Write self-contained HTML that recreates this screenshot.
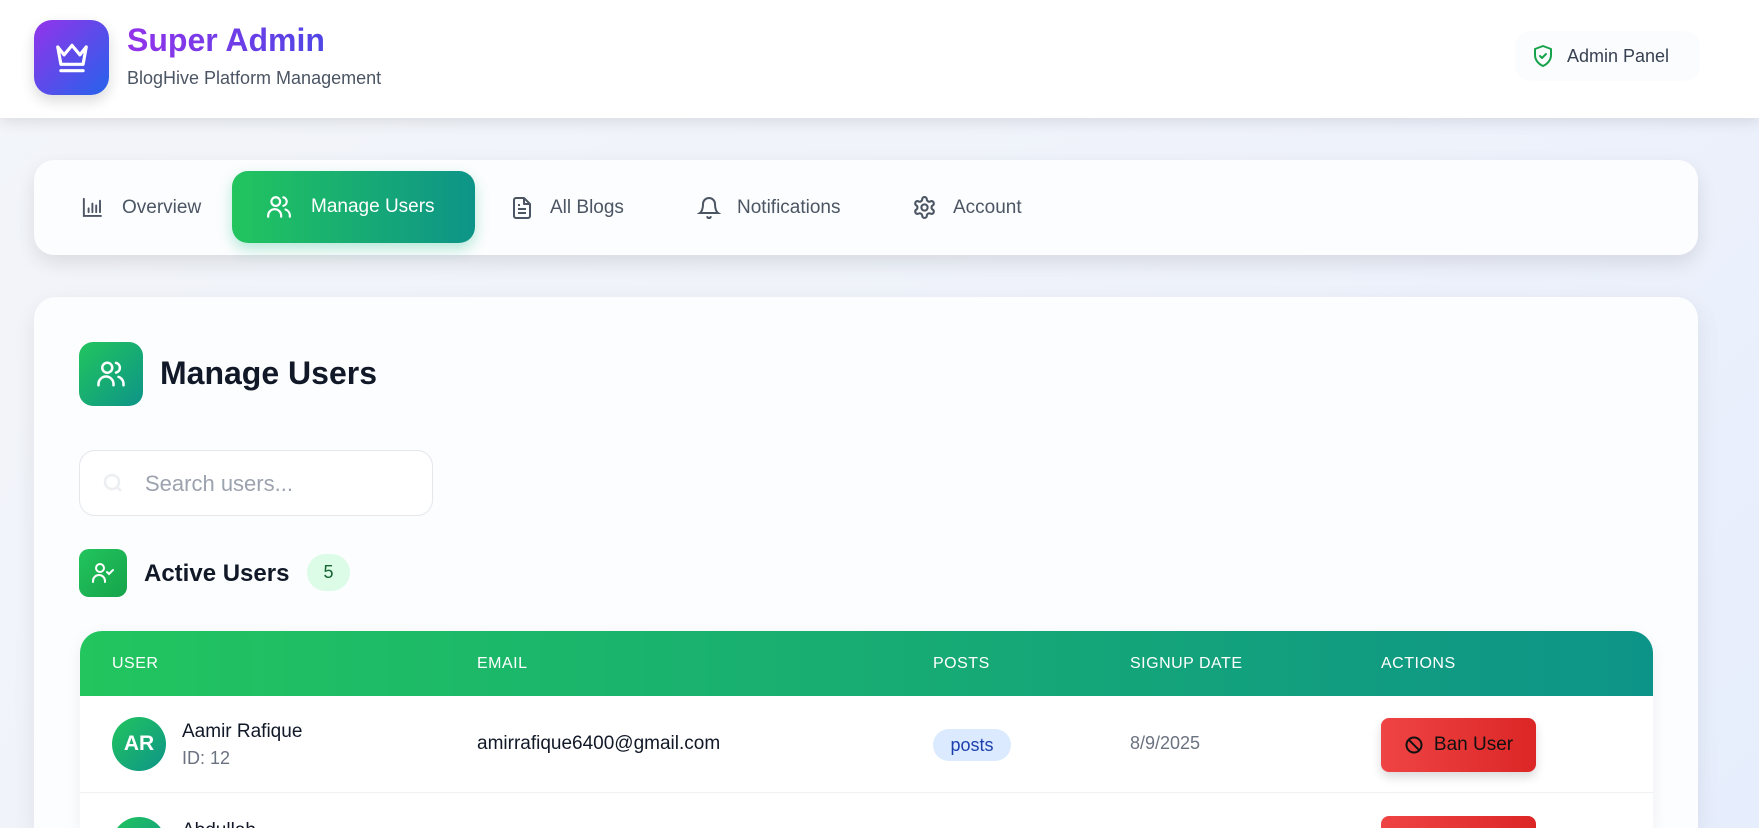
<!DOCTYPE html>
<html><head><meta charset="utf-8"><style>
*{box-sizing:border-box;margin:0;padding:0}
html{width:1759px;height:828px;overflow:hidden}
body{width:1759px;height:828px;overflow:hidden;font-family:"Liberation Sans",sans-serif;background:linear-gradient(135deg,#f3f5f9 0%,#eef2fb 60%,#e6edfc 100%);position:relative}
.abs{position:absolute}
.header{left:0;top:0;width:1759px;height:118px;background:#fff;box-shadow:0 4px 14px rgba(0,0,0,.1)}
.logo{left:34px;top:20px;width:75px;height:75px;border-radius:18px;background:linear-gradient(135deg,#9333ea,#2563eb);box-shadow:0 6px 14px rgba(0,0,0,.15);display:flex;align-items:center;justify-content:center}
.title{left:127px;top:22px;font-size:32px;font-weight:bold;background:linear-gradient(90deg,#9333ea,#4f46e5);-webkit-background-clip:text;color:transparent}
.sub{left:127px;top:68px;font-size:18px;color:#4b5563}
.pill{left:1515px;top:31px;width:185px;height:50px;border-radius:16px;background:#fbfcfe;display:flex;align-items:center;padding-left:16px;font-size:18px;color:#374151;gap:12px}
.nav{left:34px;top:160px;width:1664px;height:95px;border-radius:20px;background:#fcfdfe;box-shadow:0 8px 20px rgba(0,0,0,.1)}
.tab{position:absolute;top:0;height:95px;display:flex;align-items:center;font-size:19px;color:#4b5563;gap:0}
.active{left:198px;top:11px;width:243px;height:72px;border-radius:16px;background:linear-gradient(90deg,#22c55e,#0d9488);color:#fff;box-shadow:0 6px 14px rgba(16,185,129,.3)}
.main{left:34px;top:297px;width:1664px;height:531px;border-radius:22px 22px 0 0;background:#fcfdfe;box-shadow:0 8px 24px rgba(0,0,0,.08)}
.ic{display:flex;align-items:center;justify-content:center}
.col{position:absolute}
</style></head><body>
<div class="abs header"></div>
<div class="abs logo"><svg width="38" height="38" viewBox="0 0 24 24" fill="none" stroke="#fff" stroke-width="2" stroke-linecap="round" stroke-linejoin="round"><path d="M3 5l4 5 5-6 5 6 4-5-2 11H5z"/><path d="M5 20h14"/></svg></div>
<div class="abs title">Super Admin</div>
<div class="abs sub">BlogHive Platform Management</div>
<div class="abs pill"><svg width="24" height="24" viewBox="0 0 24 24" fill="none" stroke="#16a34a" stroke-width="2" stroke-linecap="round" stroke-linejoin="round"><path d="M12 2l8 3v6c0 5-3.5 9-8 11-4.5-2-8-6-8-11V5z"/><path d="M9 12l2 2 4-4"/></svg>Admin Panel</div>

<div class="abs nav">
 <div class="tab" style="left:47px"><svg width="24" height="24" viewBox="0 0 24 24" fill="none" stroke="#4b5563" stroke-width="2" stroke-linecap="round"><path d="M3 3v18h18M8 17v-4M12 17V8M16 17v-7M20 17V5" transform="scale(.95)"/></svg><span style="margin-left:17px">Overview</span></div>
 <div class="tab active abs" style="padding-left:34px"><svg width="26" height="26" viewBox="0 0 24 24" fill="none" stroke="#fff" stroke-width="2" stroke-linecap="round"><circle cx="9" cy="7" r="4"/><path d="M2 21v-1a6 6 0 0 1 12 0v1M16 3.1a4 4 0 0 1 0 7.8M22 21v-1a6 6 0 0 0-4-5.7"/></svg><span style="margin-left:19px">Manage Users</span></div>
 <div class="tab" style="left:476px"><svg width="24" height="26" viewBox="0 0 24 24" fill="none" stroke="#4b5563" stroke-width="2" stroke-linejoin="round"><path d="M14 2H6a2 2 0 0 0-2 2v16a2 2 0 0 0 2 2h12a2 2 0 0 0 2-2V8z"/><path d="M14 2v6h6M8 13h8M8 17h8M8 9h2"/></svg><span style="margin-left:16px">All Blogs</span></div>
 <div class="tab" style="left:663px"><svg width="24" height="26" viewBox="0 0 24 24" fill="none" stroke="#4b5563" stroke-width="2" stroke-linecap="round"><path d="M6 8a6 6 0 0 1 12 0c0 7 3 9 3 9H3s3-2 3-9M10.3 21a1.9 1.9 0 0 0 3.4 0"/></svg><span style="margin-left:16px">Notifications</span></div>
 <div class="tab" style="left:878px"><svg width="25" height="25" viewBox="0 0 24 24" fill="none" stroke="#4b5563" stroke-width="2"><circle cx="12" cy="12" r="3"/><path d="M12.2 2h-.4a2 2 0 0 0-2 2v.2a2 2 0 0 1-1 1.7l-.4.3a2 2 0 0 1-2 0l-.2-.1a2 2 0 0 0-2.7.7l-.2.4a2 2 0 0 0 .7 2.7l.2.1a2 2 0 0 1 1 1.7v.5a2 2 0 0 1-1 1.800l-.2.1a2 2 0 0 0-.7 2.7l.2.4a2 2 0 0 0 2.7.7l.2-.1a2 2 0 0 1 2 0l.4.3a2 2 0 0 1 1 1.7v.2a2 2 0 0 0 2 2h.4a2 2 0 0 0 2-2v-.2a2 2 0 0 1 1-1.7l.4-.3a2 2 0 0 1 2 0l.2.1a2 2 0 0 0 2.7-.7l.2-.4a2 2 0 0 0-.7-2.7l-.2-.1a2 2 0 0 1-1-1.8v-.5a2 2 0 0 1 1-1.7l.2-.1a2 2 0 0 0 .7-2.7l-.2-.4a2 2 0 0 0-2.7-.7l-.2.1a2 2 0 0 1-2 0l-.4-.3a2 2 0 0 1-1-1.7V4a2 2 0 0 0-2-2z"/></svg><span style="margin-left:16px">Account</span></div>
</div>

<div class="abs main"></div>
<div class="abs ic" style="left:79px;top:342px;width:64px;height:64px;border-radius:14px;background:linear-gradient(135deg,#22c55e,#0d9488)"><svg width="30" height="30" viewBox="0 0 24 24" fill="none" stroke="#fff" stroke-width="2" stroke-linecap="round"><circle cx="9" cy="7" r="4"/><path d="M2 21v-1a6 6 0 0 1 12 0v1M16 3.1a4 4 0 0 1 0 7.8M22 21v-1a6 6 0 0 0-4-5.7"/></svg></div>
<div class="abs" style="left:160px;top:355px;font-size:32px;font-weight:bold;color:#111827">Manage Users</div>
<div class="abs" style="left:79px;top:450px;width:354px;height:66px;border:1px solid #e5e7eb;border-radius:16px;background:#fff"></div>
<svg class="abs" style="left:101px;top:471px" width="24" height="24" viewBox="0 0 24 24" fill="none" stroke="#eceef1" stroke-width="2.5"><circle cx="11" cy="11" r="7"/><path d="M20 20l-4-4"/></svg>
<div class="abs" style="left:145px;top:471px;font-size:22px;color:#9ca3af">Search users...</div>

<div class="abs ic" style="left:79px;top:549px;width:48px;height:48px;border-radius:10px;background:linear-gradient(135deg,#22c55e,#16a34a)"><svg width="24" height="24" viewBox="0 0 24 24" fill="none" stroke="#fff" stroke-width="2" stroke-linecap="round"><circle cx="9" cy="7" r="4"/><path d="M2 21v-1a6 6 0 0 1 12 0v1M16 11l2 2 4-4"/></svg></div>
<div class="abs" style="left:144px;top:560px;font-size:24px;font-weight:bold;color:#111827">Active Users</div>
<div class="abs ic" style="left:307px;top:554px;width:43px;height:37px;border-radius:19px;background:#dcfce7;color:#166534;font-size:18px">5</div>

<div class="abs" style="left:80px;top:631px;width:1573px;height:197px;background:#fff;border-radius:22px 22px 0 0;box-shadow:0 4px 16px rgba(0,0,0,.06);overflow:hidden">
 <div style="height:65px;background:linear-gradient(90deg,#22c55e,#0d9488);color:#fff;font-size:16px;letter-spacing:.5px;position:relative">
  <span class="col" style="left:32px;top:24px">USER</span><span class="col" style="left:397px;top:24px">EMAIL</span><span class="col" style="left:853px;top:24px">POSTS</span><span class="col" style="left:1050px;top:24px">SIGNUP DATE</span><span class="col" style="left:1301px;top:24px">ACTIONS</span>
 </div>
 <div style="height:97px;border-bottom:1px solid #f0f1f3;position:relative">
  <div class="col ic" style="left:32px;top:21px;width:54px;height:54px;border-radius:50%;background:linear-gradient(135deg,#22c55e,#0d9488);color:#fff;font-weight:bold;font-size:21px">AR</div>
  <span class="col" style="left:102px;top:25px;font-size:19px;color:#111827">Aamir Rafique</span>
  <span class="col" style="left:102px;top:52px;font-size:18px;color:#6b7280">ID: 12</span>
  <span class="col" style="left:397px;top:37px;font-size:19px;color:#111827">amirrafique6400@gmail.com</span>
  <span class="col ic" style="left:853px;top:33px;width:78px;height:32px;border-radius:16px;background:#dbeafe;color:#1e40af;font-size:18px">posts</span>
  <span class="col" style="left:1050px;top:37px;font-size:18px;color:#6b7280">8/9/2025</span>
  <div class="col ic" style="left:1301px;top:22px;width:155px;height:54px;border-radius:8px;background:linear-gradient(90deg,#ef4444,#dc2626);box-shadow:0 5px 10px rgba(0,0,0,.15);font-size:19px;color:#111;gap:10px"><svg width="20" height="20" viewBox="0 0 24 24" fill="none" stroke="#111" stroke-width="2.4"><circle cx="12" cy="12" r="9"/><path d="M5.6 5.6l12.8 12.8"/></svg>Ban User</div>
 </div>
 <div style="position:relative;height:34px">
  <div class="col" style="left:32px;top:24px;width:54px;height:54px;border-radius:50%;background:linear-gradient(135deg,#22c55e,#0d9488)"></div>
  <span class="col" style="left:102px;top:27px;font-size:19px;color:#111827">Abdullah</span>
  <div class="col" style="left:1301px;top:23px;width:155px;height:54px;border-radius:8px;background:linear-gradient(90deg,#ef4444,#dc2626)"></div>
 </div>
</div>
</body></html>
